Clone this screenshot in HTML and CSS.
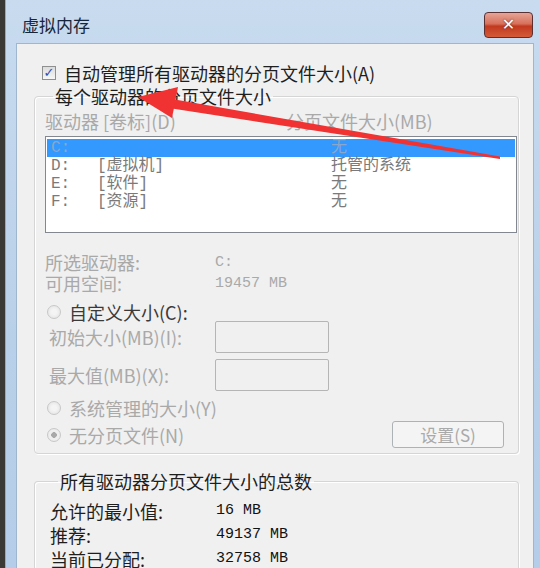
FILE: index.html
```html
<!DOCTYPE html>
<html lang="zh-CN">
<head>
    <meta charset="UTF-8">
    <title>虚拟内存</title>
    <link rel="stylesheet" href="styles.css">
</head>
<body>
    <div class="window">
        <div class="titlebar">
            <span class="title">虚拟内存</span>
            <button class="close">✕</button>
        </div>

        <div class="panel">
            <label class="auto-check">
                <span class="checkbox">✓</span>
                自动管理所有驱动器的分页文件大小(A)
            </label>

            <!-- 每个驱动器 -->
            <fieldset class="group group-drives">
                <legend>每个驱动器的分页文件大小</legend>
                <div class="list-head">
                    <span class="col-drive">驱动器 [卷标](D)</span>
                    <span>分页文件大小(MB)</span>
                </div>
                <div class="listbox">
                    <div class="row selected"><span class="c1">C:</span><span class="c2"></span><span>无</span></div>
                    <div class="row"><span class="c1">D:</span><span class="c2">[虚拟机]</span><span>托管的系统</span></div>
                    <div class="row"><span class="c1">E:</span><span class="c2">[软件]</span><span>无</span></div>
                    <div class="row"><span class="c1">F:</span><span class="c2">[资源]</span><span>无</span></div>
                </div>

                <div class="info">
                    <span>所选驱动器:</span><span class="mono">C:</span>
                    <span>可用空间:</span><span class="mono">19457 MB</span>
                </div>

                <div class="radio-line dark"><span class="radio"></span>自定义大小(C):</div>
                <div class="size-row">
                    <span>初始大小(MB)(I):</span><span class="field"></span>
                </div>
                <div class="size-row">
                    <span>最大值(MB)(X):</span><span class="field"></span>
                </div>
                <div class="radio-line"><span class="radio"></span>系统管理的大小(Y)</div>
                <div class="last-row">
                    <div class="radio-line"><span class="radio checked"></span>无分页文件(N)</div>
                    <button class="btn">设置(S)</button>
                </div>
            </fieldset>

            <!-- 总数 -->
            <fieldset class="group group-total">
                <legend>所有驱动器分页文件大小的总数</legend>
                <div class="totals">
                    <span>允许的最小值:</span><span class="mono">16 MB</span>
                    <span>推荐:</span><span class="mono">49137 MB</span>
                    <span>当前已分配:</span><span class="mono">32758 MB</span>
                </div>
            </fieldset>
        </div>
    </div>

    <svg class="arrow" width="540" height="568" viewBox="0 0 540 568">
        <polygon points="172,99 500,156.5 500,159 172,108.5" fill="#f03232"/>
        <polygon points="138,97 178,87 172,118" fill="#f03232"/>
    </svg>
</body>
</html>
```

FILE: styles.css
```css
* {
    margin: 0;
    padding: 0;
    box-sizing: border-box;
}

body {
    width: 540px;
    height: 568px;
    overflow: hidden;
    background: #3b3936;
    font-family: "Noto Sans CJK SC", "Liberation Sans", sans-serif;
    font-size: 18px;
    color: #1e1e1e;
}

.window {
    margin-left: 5px;
    height: 568px;
    background: linear-gradient(180deg, #c8dbef 0%, #b9d0e9 60%, #b5cde8 100%);
    border-left: 1px solid #8fa9c6;
    display: flex;
    flex-direction: column;
    overflow: hidden;
}

.titlebar {
    flex-shrink: 0;
    height: 43px;
    display: flex;
    align-items: center;
    justify-content: space-between;
    padding: 0 7px 0 16px;
}

.title {
    font-size: 17px;
    color: #15263a;
    margin-top: 6px;
}

.close {
    width: 49px;
    height: 26px;
    margin-top: 7px;
    border: 1px solid #5b3033;
    border-radius: 4px;
    background: linear-gradient(180deg, #e6a596 0%, #d8705b 45%, #c2391f 55%, #d35a3a 100%);
    color: #fff;
    font-size: 16px;
    font-weight: bold;
    font-family: "DejaVu Sans", sans-serif;
    line-height: 22px;
    text-shadow: 0 0 2px #5a2020;
}

.panel {
    flex: 1 0 auto;
    margin: 0 6px 0 10px;
    background: #f0f0f0;
    border: 1px solid #9fb6cf;
    border-bottom: none;
    padding: 18px 14px 0 17px;
}

.auto-check {
    display: flex;
    align-items: center;
    gap: 8px;
    margin-left: 8px;
    height: 22px;
    line-height: 22px;
}

.checkbox {
    width: 14px;
    height: 14px;
    border: 1px solid #8e8f8f;
    background: linear-gradient(180deg, #dcdcdc, #f6f6f6);
    color: #2a4fb0;
    font-size: 13px;
    font-weight: bold;
    line-height: 12px;
    text-align: center;
    font-family: "DejaVu Sans", sans-serif;
}

.group {
    border: 1px solid #d5d5d5;
    border-radius: 4px;
    box-shadow: inset 1px 1px 0 #fff, 1px 1px 0 #fff;
}

.group legend {
    margin-left: 8px;
    padding: 0 2px;
    line-height: 20px;
    color: #1e1e1e;
}

.group-drives {
    margin-top: 2px;
    padding: 0 1px 9px 10px;
    height: 368px;
}

.list-head {
    display: flex;
    color: #a9a9a9;
    height: 22px;
    line-height: 22px;
    margin-top: 4px;
}

.col-drive {
    width: 241px;
}

.listbox {
    height: 97px;
    margin-top: 4px;
    border: 1px solid #828790;
    background: #fff;
    padding: 2px 1px;
    font-family: "Liberation Mono", "Noto Sans CJK SC", monospace;
    font-size: 16px;
    color: #7a7a7a;
}

.row {
    display: flex;
    height: 18px;
    line-height: 18px;
    padding-left: 4px;
}

.row.selected {
    background: #3399ff;
    color: #8aa6c8;
}

.c1 {
    width: 46px;
}

.c2 {
    width: 234px;
}

.info {
    display: grid;
    grid-template-columns: 170px auto;
    margin-top: 19px;
    line-height: 21px;
    color: #a9a9a9;
}

.mono {
    font-family: "Liberation Mono", monospace;
    font-size: 15px;
}

.radio-line {
    display: flex;
    align-items: center;
    gap: 8px;
    height: 26px;
    color: #a9a9a9;
    margin-left: 2px;
}

.radio-line.dark {
    color: #3a3a3a;
    height: 18px;
    margin-top: 9px;
}

.radio {
    width: 14px;
    height: 14px;
    border-radius: 50%;
    border: 1px solid #c8c8c8;
    background: radial-gradient(circle, #f4f4f4 30%, #e0e0e0 100%);
}

.radio.checked {
    background: radial-gradient(circle, #a8a8a8 0 30%, #eeeeee 36% 60%, #dadada 100%);
}

.size-row {
    display: flex;
    align-items: center;
    height: 32px;
    margin-bottom: 6px;
    color: #a9a9a9;
    margin-left: 4px;
}

.size-row span:first-child {
    width: 166px;
}

.field {
    width: 114px;
    height: 32px;
    border: 1px solid #b5b5b5;
    border-radius: 2px;
    background: #f0f0f0;
}

.size-row + .radio-line {
    margin-top: -2px;
}

.last-row {
    display: flex;
    align-items: center;
    justify-content: space-between;
    padding-right: 13px;
}

.btn {
    width: 112px;
    height: 27px;
    border: 1px solid #adb2b5;
    border-radius: 3px;
    background: #f4f4f4;
    color: #a9a9a9;
    font-family: inherit;
    font-size: 17px;
    line-height: 24px;
}

.group-total {
    margin-top: 17px;
    padding: 8px 1px 0 15px;
    height: 120px;
    border-bottom: none;
}

.totals {
    display: grid;
    grid-template-columns: 166px auto;
    grid-auto-rows: 24px;
    line-height: 24px;
}

.totals .mono {
    color: #111;
}

.arrow {
    position: absolute;
    top: 0;
    left: 0;
    pointer-events: none;
}
```
